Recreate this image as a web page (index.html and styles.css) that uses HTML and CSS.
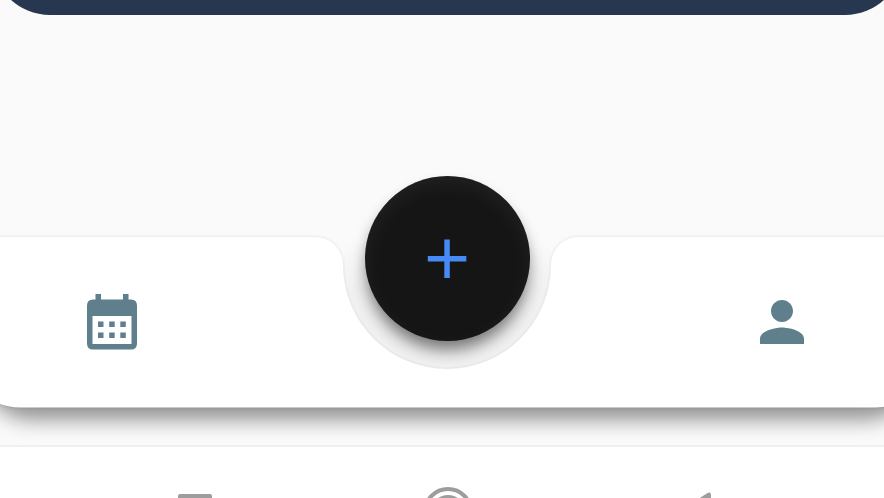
FILE: index.html
```html
<!DOCTYPE html>
<html lang="en">
<head>
<meta charset="utf-8">
<title>Home</title>
<link rel="stylesheet" href="styles.css">
</head>
<body>
<div class="screen">
  <main class="content"><div class="card"></div></main>
  <nav class="tabbar">
    <svg class="tabbar-shape" viewBox="0 0 884 209" aria-hidden="true">
      <defs>
        <filter id="soft" x="-10%" y="-30%" width="120%" height="170%"><feGaussianBlur stdDeviation="10"/></filter>
        <filter id="glow" x="-30%" y="-30%" width="160%" height="160%"><feGaussianBlur stdDeviation="9"/></filter>
        <linearGradient id="shade" x2="0" y2="1">
          <stop offset=".38" stop-opacity="0"/>
          <stop offset=".62" stop-opacity=".035"/>
        </linearGradient>
        <clipPath id="below"><rect y="160" width="884" height="49"/></clipPath>
      </defs>
      <g clip-path="url(#below)"><rect class="cast" x="-18" y="20" width="934" height="163" rx="50" filter="url(#soft)"/></g>
      <circle cx="447" cy="28" r="103.500" fill="url(#shade)"/>
      <circle class="fab-cast" cx="447" cy="34" r="81" filter="url(#glow)"/>
      <path class="surface" d="M-38 0H315C331 0 343 12 343 28A104 104 0 0 0 551 28C551 12 563 0 579 0H933V112A58 58 0 0 1 875 170.500H20A58 58 0 0 1 -38 112Z"/>
    </svg>
    <button class="tab" aria-label="Calendar">
      <svg width="50" height="56" viewBox="0 0 50 56">
        <path fill-rule="evenodd" d="M8.500 0H14V5.500H36V0H41.500V5.500H44Q50 5.500 50 11.500V49.500Q50 55.500 44 55.500H6Q0 55.500 0 49.500V11.500Q0 5.500 6 5.500H8.500ZM5.500 22V50H44.500V22Z"/>
        <path d="M11 27.500h5.500V33H11zM22.200 27.500h5.500V33h-5.500zM33.300 27.500h5.500V33h-5.500zM11 38.500h5.500V44H11zM22.200 38.500h5.500V44h-5.500zM33.300 38.500h5.500V44h-5.500z"/>
      </svg>
    </button>
    <button class="fab" aria-label="Add">
      <svg width="40" height="40" viewBox="0 0 40 40"><path d="M17.300 .6h5.500v16.500h16.500v5.500H22.800v16.500h-5.500V22.600H.8v-5.500h16.500z"/></svg>
    </button>
    <button class="tab" aria-label="Profile">
      <svg width="44" height="44" viewBox="4 4 16 16"><path d="M12 12c2.210 0 4-1.790 4-4s-1.790-4-4-4-4 1.790-4 4 1.790 4 4 4zm0 2c-2.670 0-8 1.340-8 4v2h16v-2c0-2.660-5.330-4-8-4z"/></svg>
    </button>
  </nav>
  <footer class="system">
    <svg width="34" height="36" viewBox="0 0 34 36"><rect width="34" height="34" rx="2"/></svg>
    <svg width="50" height="50" viewBox="0 0 50 50"><circle class="ring" cx="25" cy="25" r="23"/><circle cx="25" cy="25" r="17"/></svg>
    <svg width="34" height="42" viewBox="0 0 34 42"><path d="M31 .8Q34 -.5 34 3V39Q34 42 31 40L2 23Q0 21 2 19Z"/></svg>
  </footer>
</div>
</body>
</html>
```
FILE: styles.css
```css
* { box-sizing: border-box; }
body { margin: 0; font-family: Roboto, sans-serif; }
.screen {
  width: 884px;
  height: 498px;
  overflow: hidden;
  display: grid;
  grid-template-rows: 237px 208px 53px;
  background: #fafafa;
}
.content { min-width: 0; }
.card {
  width: 911px;
  height: 120px;
  margin: -105px 0 0 -8px;
  border-radius: 58px;
  background: #27374f;
}
.tabbar {
  position: relative;
  display: grid;
  grid-template-columns: 224px 1fr 204px;
  height: 208px;
}
.tabbar-shape {
  position: absolute;
  inset: 0;
  width: 884px;
  height: 209px;
  overflow: visible;
}
.cast { fill: rgba(0, 0, 0, .41); }
.fab-cast { fill: rgba(0, 0, 0, .18); }
.surface { fill: #fff; filter: drop-shadow(0 0 1.5px rgba(0, 0, 0, .13)); }
button { padding: 0; border: 0; background: none; position: relative; }
button svg { display: block; margin: 0 auto; }
.tab { height: 169px; fill: #607f8d; }
.tab:last-of-type svg { margin-left: 80px; }
.fab {
  width: 165px;
  height: 165px;
  margin: -61px 0 0 140.500px;
  border-radius: 50%;
  background: #151515;
  box-shadow: inset 0 7px 22px rgba(255, 255, 255, .055), 0 10px 15px -3px rgba(0, 0, 0, .42);
  fill: #4789f5;
}
.fab svg { position: relative; left: -.5px; }
.system {
  position: relative;
  display: grid;
  grid-template-columns: 178px 246px 253px 1fr;
  align-items: start;
  border-top: 2px solid #efefef;
  background: #fff;
  fill: #9d9d9d;
}
.system svg { margin-top: 46.500px; }
.system svg:nth-child(1) { grid-column: 2; }
.system svg:nth-child(2) { grid-column: 3; margin-top: 39.500px; margin-left: -1px; }
.system svg:nth-child(3) { grid-column: 4; margin-top: 45px; }
.ring { fill: none; stroke: #9d9d9d; stroke-width: 4; }
```
